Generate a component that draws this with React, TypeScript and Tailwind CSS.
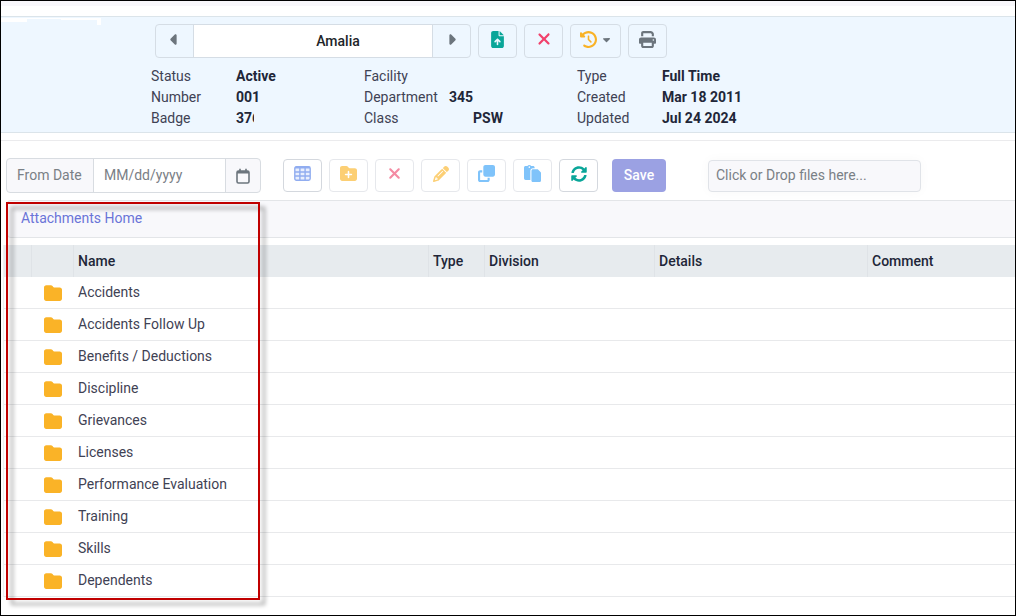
import type { ReactNode } from "react";
import {
  FaCaretLeft,
  FaCaretRight,
  FaClockRotateLeft,
  FaClone,
  FaFileArrowUp,
  FaFolder,
  FaFolderPlus,
  FaPaste,
  FaPencil,
  FaPrint,
  FaCaretDown,
  FaXmark,
} from "react-icons/fa6";
import { FaSyncAlt } from "react-icons/fa";

const folders = [
  "Accidents",
  "Accidents Follow Up",
  "Benefits / Deductions",
  "Discipline",
  "Grievances",
  "Licenses",
  "Performance Evaluation",
  "Training",
  "Skills",
  "Dependents",
];

function HeaderButton({ label, wide, children }: { label: string; wide?: boolean; children: ReactNode }) {
  return (
    <button
      type="button"
      aria-label={label}
      className={`flex h-[34px] items-center justify-center gap-1 rounded border border-[#d5dde5] pb-1 ${wide ? "w-[51px]" : "w-[39px]"}`}
    >
      {children}
    </button>
  );
}

function ToolButton({ label, strong, children }: { label: string; strong?: boolean; children: ReactNode }) {
  return (
    <button
      type="button"
      aria-label={label}
      className={`flex h-[33px] w-[39px] items-center justify-center rounded border bg-white pb-1 ${strong ? "border-[#d4d8de]" : "border-[#e6e8ec]"}`}
    >
      {children}
    </button>
  );
}

function CalendarIcon() {
  return (
    <svg viewBox="0 0 14 16" className="h-4 w-[14px]" fill="none" stroke="#6c757d" strokeWidth="1.6" aria-hidden="true">
      <rect x="1" y="3" width="12" height="12" rx="1.5" />
      <path d="M1 4.2h12" strokeWidth="2.4" />
      <path d="M4 0.8v3M10 0.8v3" />
    </svg>
  );
}

function GridIcon() {
  return (
    <svg viewBox="0 0 17 15" className="h-[15px] w-[17px]" fill="none" stroke="#91adf0" strokeWidth="1.4" aria-hidden="true">
      <rect x="0.8" y="0.8" width="15.4" height="13.4" rx="1.6" fill="#e9effd" />
      <path d="M1 1.6h15" strokeWidth="1.8" />
      <path d="M5.9 1v13M11.1 1v13M1 6h15M1 10h15" />
    </svg>
  );
}

export default function App() {
  return (
    <div className="flex min-h-screen flex-col border border-black bg-white font-[Roboto,sans-serif] text-[14px] leading-[21px] text-[#3f4254]">
      <div className="mb-[10px] h-[5px] bg-[#f8f7fb]" />

      <header className="relative border-y border-[#dbe4ea] bg-[#eef7ff] pb-[3px] pt-[7px]">
        <svg className="absolute left-0 top-[1px] h-[7px] w-[100px]" viewBox="0 0 100 7" aria-hidden="true">
          <path d="M0 0H100V7H96V2L60 2V1H26V4H0Z" fill="#fff" />
        </svg>

        <div className="ml-[154px] flex items-center gap-[7px]">
          <div className="flex h-[34px] w-[316px] rounded border border-[#d5dde5]">
            <button type="button" aria-label="Previous employee" className="flex w-[37px] items-center justify-center pb-1 text-[#6c757d]">
              <FaCaretLeft size={17} />
            </button>
            <input
              aria-label="Employee"
              defaultValue="Amalia"
              className="min-w-0 flex-1 border-x border-[#d5dde5] bg-white pl-[50px] text-center font-medium text-[#212529] outline-none"
            />
            <button type="button" aria-label="Next employee" className="flex w-[37px] items-center justify-center pb-1 text-[#6c757d]">
              <FaCaretRight size={17} />
            </button>
          </div>
          <HeaderButton label="Upload"><FaFileArrowUp size={17} color="#0aa699" /></HeaderButton>
          <HeaderButton label="Delete"><FaXmark size={18} color="#f1416c" /></HeaderButton>
          <HeaderButton label="History" wide>
            <FaClockRotateLeft size={17} color="#f9b226" />
            <FaCaretDown size={11} color="#6c757d" />
          </HeaderButton>
          <HeaderButton label="Print"><FaPrint size={17} color="#6c757d" /></HeaderButton>
        </div>

        <dl className="ml-[150px] mt-2 grid grid-cols-[85px_128px_85px_128px_85px_1fr] [&>dd]:font-bold [&>dd]:text-[#212638]">
          <dt>Status</dt><dd>Active</dd>
          <dt>Facility</dt><dd />
          <dt>Type</dt><dd>Full Time</dd>
          <dt>Number</dt><dd>001</dd>
          <dt>Department</dt><dd>345</dd>
          <dt>Created</dt><dd>Mar 18 2011</dd>
          <dt>Badge</dt><dd className="w-[18px] overflow-hidden">376</dd>
          <dt>Class</dt><dd className="pl-6">PSW</dd>
          <dt>Updated</dt><dd>Jul 24 2024</dd>
        </dl>
      </header>

      <div className="mt-[7px] flex items-center border-t border-[#ebebed] pb-[7px] pl-[5px] pt-[17px]">
        <div className="flex h-[35px] w-[255px] overflow-hidden rounded border border-[#d8dce1] bg-[#f8f8fb]">
          <label htmlFor="from-date" className="flex w-[86px] items-center pl-[10px] text-[#7a8086]">From Date</label>
          <input
            id="from-date"
            placeholder="MM/dd/yyyy"
            className="min-w-0 flex-1 border-x border-[#d8dce1] bg-white pl-[10px] outline-none placeholder:text-[#7a8086]"
          />
          <button type="button" aria-label="Open calendar" className="flex w-[34px] items-center justify-center">
            <CalendarIcon />
          </button>
        </div>

        <div className="ml-[22px] flex gap-[7px]">
          <ToolButton label="Grid view" strong><GridIcon /></ToolButton>
          <ToolButton label="New folder"><FaFolderPlus size={17} color="#fccf74" /></ToolButton>
          <ToolButton label="Remove"><FaXmark size={17} color="#f48ba3" /></ToolButton>
          <ToolButton label="Edit"><FaPencil size={16} color="#fccf74" /></ToolButton>
          <ToolButton label="Copy"><FaClone size={17} color="#7fc3fa" /></ToolButton>
          <ToolButton label="Paste"><FaPaste size={17} color="#7fc3fa" /></ToolButton>
          <ToolButton label="Refresh" strong><FaSyncAlt size={16} color="#0aa699" /></ToolButton>
        </div>

        <button type="button" className="ml-[14px] h-[33px] w-[54px] rounded bg-[#9ba1e3] font-medium text-white">Save</button>
        <button
          type="button"
          className="ml-[42px] h-8 w-[213px] rounded border border-[#e0e3e8] bg-[#f8f8fb] px-[7px] text-left text-[#7a8086] shadow-[0_0_12px_rgba(0,0,0,0.03)]"
        >
          Click or Drop files here...
        </button>
      </div>

      <main className="relative">
        <nav aria-label="Breadcrumb" className="ml-[6px] flex h-[38px] items-center rounded-l border-y border-l border-[#e3e5e8] bg-[#f8f8fb] pb-[2px] pl-[13px]">
          <a href="#home" className="text-[#6a74d8]">Attachments Home</a>
        </nav>

        <div className="ml-[2px] mt-[7px] border-l border-[#eeeff1]">
          <table className="w-full table-fixed border-separate border-spacing-0 text-left">
            <colgroup>
              <col className="w-[28px]" />
              <col className="w-[42px]" />
              <col className="w-[355px]" />
              <col className="w-[56px]" />
              <col className="w-[170px]" />
              <col className="w-[213px]" />
              <col />
            </colgroup>
            <thead>
              <tr className="h-8 bg-[#e7ebee] [&>th]:border-r [&>th]:border-[#dfe3e7] [&>th]:px-1 [&>th]:py-0 [&>th]:font-medium [&>th]:text-[#212638] [&>th:last-child]:border-r-0">
                <th aria-label="Select" />
                <th aria-label="Kind" />
                <th>Name</th>
                <th>Type</th>
                <th>Division</th>
                <th>Details</th>
                <th>Comment</th>
              </tr>
            </thead>
            <tbody>
              {folders.map((name) => (
                <tr key={name} className="h-8 [&>td]:border-b [&>td]:border-[#e8e9eb] [&>td]:px-1 [&>td]:py-0">
                  <td />
                  <td><FaFolder size={18} color="#fab327" className="ml-2" /></td>
                  <td>{name}</td>
                  <td />
                  <td />
                  <td />
                  <td />
                </tr>
              ))}
            </tbody>
          </table>
        </div>

        <div
          aria-hidden="true"
          className="pointer-events-none absolute -bottom-[3px] left-[5px] top-[2px] w-[254px] border-2 border-[#c00000] drop-shadow-[5px_5px_2px_rgba(0,0,0,0.4)]"
        />
      </main>
    </div>
  );
}
